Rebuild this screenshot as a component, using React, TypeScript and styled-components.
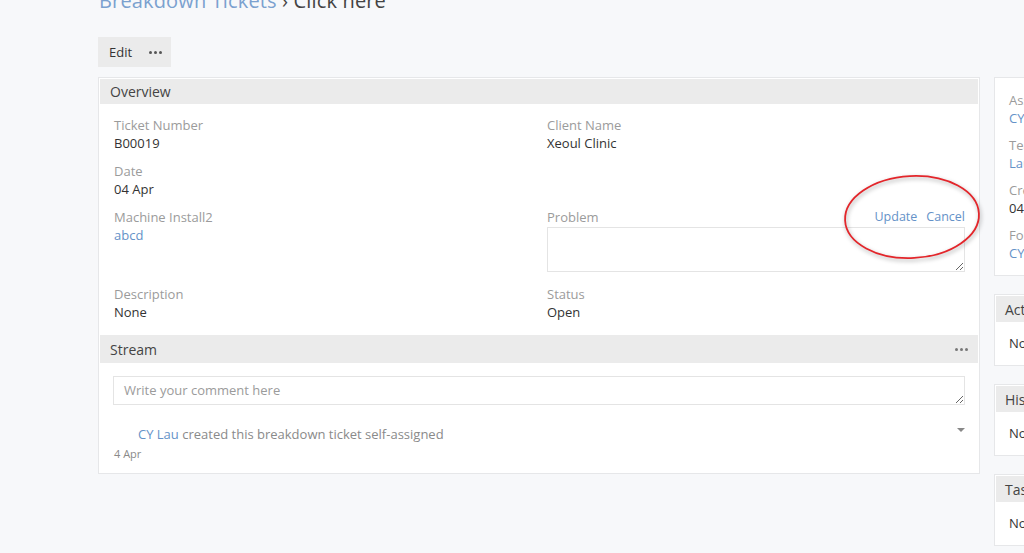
import React from "react";
import styled, { createGlobalStyle } from "styled-components";

const Global = createGlobalStyle`
  html, body { margin: 0; padding: 0; }
  body {
    background: #f7f8fa;
    font-family: "Open Sans", "Liberation Sans", sans-serif;
    color: #333;
    overflow: hidden;
    width: 1024px;
    height: 553px;
  }
`;

const Root = styled.div`
  position: relative;
  width: 1024px;
  height: 553px;
  overflow: hidden;
`;

const Page = styled.div`
  padding-left: 98px;
  display: flex;
  flex-direction: column;
`;

const Title = styled.h1`
  margin: -11px 0 0 1px;
  font-size: 20px;
  line-height: 24px;
  font-weight: 400;
  color: #444;
  white-space: nowrap;
  letter-spacing: 0.15px;
`;

const Crumb = styled.span`
  color: #7ba1cf;
`;

const Toolbar = styled.div`
  margin-top: 24px;
  display: flex;
`;

const ToolButton = styled.div`
  height: 30px;
  width: 73px;
  box-sizing: border-box;
  background: #ebebeb;
  display: flex;
  align-items: center;
  padding-left: 11px;
  gap: 17px;
  font-size: 13px;
  color: #333;
`;

const Dots = styled.span<{ $color?: string }>`
  display: inline-flex;
  gap: 2px;
  & > i {
    width: 3px;
    height: 3px;
    border-radius: 50%;
    background: ${(p) => p.$color || "#555"};
    display: block;
  }
`;

const Columns = styled.div`
  margin-top: 10px;
  display: flex;
  gap: 14px;
  align-items: flex-start;
`;

const MainCol = styled.div`
  width: 882px;
  flex: none;
`;

const Card = styled.div`
  background: #fff;
  border: 1px solid #e6e7e9;
  padding: 1px;
  box-sizing: border-box;
`;

const Header = styled.div<{ $h?: number }>`
  height: ${(p) => p.$h || 25}px;
  background: #ebebeb;
  display: flex;
  align-items: center;
  justify-content: space-between;
  padding: 0 10px 0 10px;
  font-size: 14px;
  color: #444;
`;

const OverviewBody = styled.div`
  padding: 12px 13px 14px 14px;
  display: grid;
  grid-template-columns: 418px 418px;
  column-gap: 15px;
  row-gap: 10px;
`;

const Field = styled.div`
  display: flex;
  flex-direction: column;
  font-size: 13px;
  line-height: 18px;
`;

const LabelRow = styled.div`
  display: flex;
  justify-content: space-between;
`;

const Label = styled.span`
  color: #9b9b9b;
`;

const Value = styled.span<{ $link?: boolean }>`
  color: ${(p) => (p.$link ? "#6592c8" : "#333")};
`;

const Actions = styled.div`
  display: flex;
  gap: 9px;
  font-size: 12.5px;
  color: #6592c8;
`;

const TextArea = styled.textarea<{ $h: number }>`
  display: block;
  box-sizing: border-box;
  width: 100%;
  height: ${(p) => p.$h}px;
  border: 1px solid #e4e4e4;
  background: #fff;
  font-family: "Open Sans", "Liberation Sans", sans-serif;
  font-size: 13px;
  padding: 4px 10px;
  color: #333;
  outline: none;
  &::placeholder {
    color: #9b9b9b;
  }
`;

const ProblemBox = styled.div`
  margin-top: 1px;
  margin-bottom: 3px;
`;

const StreamBody = styled.div`
  padding: 13px 13px 11px 13px;
`;

const Activity = styled.div`
  margin-top: 20px;
  display: flex;
  flex-direction: column;
  padding-left: 1px;
`;

const ActivityLine = styled.div`
  display: flex;
  justify-content: space-between;
  align-items: center;
  font-size: 13px;
  line-height: 18px;
  color: #8a8a8a;
  padding-left: 24px;
`;

const Who = styled.span`
  color: #6592c8;
`;

const Caret = styled.span`
  width: 0;
  height: 0;
  border-left: 4px solid transparent;
  border-right: 4px solid transparent;
  border-top: 4px solid #888;
  margin-top: -8px;
`;

const When = styled.div`
  margin-top: 4px;
  font-size: 11px;
  line-height: 14px;
  color: #8a8a8a;
`;

const SideCol = styled.div`
  width: 260px;
  flex: none;
  display: flex;
  flex-direction: column;
  gap: 18px;
`;

const SideInfo = styled.div`
  padding: 12px 13px 12px 13px;
  display: flex;
  flex-direction: column;
  gap: 9px;
`;

const SideBody = styled.div`
  padding: 12px 13px 12px 13px;
  font-size: 13px;
  line-height: 18px;
  color: #333;
`;

const SideHeader = styled(Header)`
  padding-left: 9px;
`;

const Annotation = styled.svg`
  position: absolute;
  left: 838px;
  top: 171px;
  width: 150px;
  height: 100px;
  overflow: visible;
  filter: drop-shadow(1px 2px 2px rgba(0, 0, 0, 0.35));
  pointer-events: none;
`;

const ThreeDots = ({ color }: { color?: string }) => (
  <Dots $color={color}>
    <i />
    <i />
    <i />
  </Dots>
);

export default function App() {
  return (
    <Root>
      <Global />
      <Page>
        <Title>
          <Crumb>Breakdown Tickets</Crumb> › Click here
        </Title>
        <Toolbar>
          <ToolButton>
            Edit
            <ThreeDots />
          </ToolButton>
        </Toolbar>
        <Columns>
          <MainCol>
            <Card>
              <Header>Overview</Header>
              <OverviewBody>
                <Field>
                  <Label>Ticket Number</Label>
                  <Value>B00019</Value>
                </Field>
                <Field>
                  <Label>Client Name</Label>
                  <Value>Xeoul Clinic</Value>
                </Field>
                <Field>
                  <Label>Date</Label>
                  <Value>04 Apr</Value>
                </Field>
                <Field />
                <Field>
                  <Label>Machine Install2</Label>
                  <Value $link>abcd</Value>
                </Field>
                <Field>
                  <LabelRow>
                    <Label>Problem</Label>
                    <Actions>
                      <span>Update</span>
                      <span>Cancel</span>
                    </Actions>
                  </LabelRow>
                  <ProblemBox>
                    <TextArea $h={45} readOnly />
                  </ProblemBox>
                </Field>
                <Field>
                  <Label>Description</Label>
                  <Value>None</Value>
                </Field>
                <Field>
                  <Label>Status</Label>
                  <Value>Open</Value>
                </Field>
              </OverviewBody>
              <Header $h={28}>
                Stream
                <ThreeDots color="#777" />
              </Header>
              <StreamBody>
                <TextArea $h={29} readOnly placeholder="Write your comment here" />
                <Activity>
                  <ActivityLine>
                    <span>
                      <Who>CY Lau</Who> created this breakdown ticket self-assigned
                    </span>
                    <Caret />
                  </ActivityLine>
                  <When>4 Apr</When>
                </Activity>
              </StreamBody>
            </Card>
          </MainCol>
          <SideCol>
            <Card>
              <SideInfo>
                <Field>
                  <Label>Assigned To</Label>
                  <Value $link>CY Lau</Value>
                </Field>
                <Field>
                  <Label>Team</Label>
                  <Value $link>Lau Team</Value>
                </Field>
                <Field>
                  <Label>Created</Label>
                  <Value>04 Apr</Value>
                </Field>
                <Field>
                  <Label>Followers</Label>
                  <Value $link>CY Lau</Value>
                </Field>
              </SideInfo>
            </Card>
            <Card>
              <SideHeader $h={26}>Activities</SideHeader>
              <SideBody>None</SideBody>
            </Card>
            <Card>
              <SideHeader $h={26}>History</SideHeader>
              <SideBody>None</SideBody>
            </Card>
            <Card>
              <SideHeader $h={26}>Tasks</SideHeader>
              <SideBody>None</SideBody>
            </Card>
          </SideCol>
        </Columns>
      </Page>
      <Annotation viewBox="0 0 150 100">
        <ellipse
          cx="74"
          cy="46"
          rx="67"
          ry="41"
          transform="rotate(-3 74 46)"
          fill="none"
          stroke="#e3262b"
          strokeWidth="1.8"
        />
      </Annotation>
    </Root>
  );
}
